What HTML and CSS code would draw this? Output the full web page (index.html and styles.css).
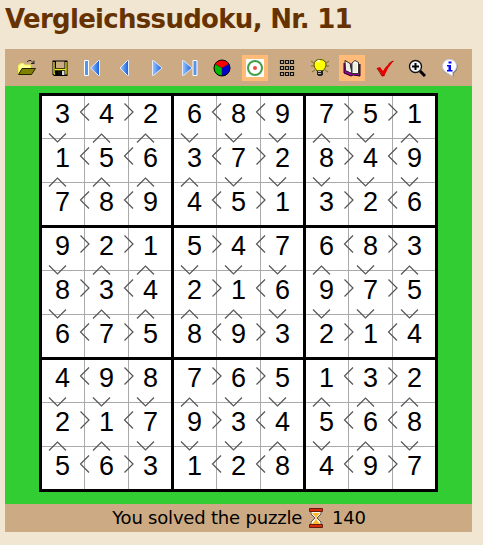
FILE: index.html
```html
<!DOCTYPE html>
<html lang="de">
<head>
<meta charset="utf-8">
<title>Vergleichssudoku, Nr. 11</title>
<link rel="stylesheet" href="styles.css">
</head>
<body>
<h1>Vergleichssudoku, Nr. 11</h1>
<main class="applet">
<nav class="toolbar">
<svg viewBox="0 0 18 18"><path d="M0.5 15.5V6h1l1-1.500h3l1 1.500h6v3" fill="#ff9" stroke="#ee5"/><path d="M0.500 15.500L4 9.500h13.500l-4 6z" fill="#808000" stroke="#222200"/><path d="M9 3l2-1.500h2l3 3M16 1.500v3h-3" fill="none" stroke="#222"/></svg>
<svg viewBox="0 0 18 18"><path d="M1.500 1.500h15v15.500H3L1.500 15.500z" fill="#000"/><path d="M3 3v11.500l1 1M15 3v12.500M4 10.500h11" fill="none" stroke="#ee2" stroke-width="1.300"/><path d="M5 2.500h8.500v6.500H5z" fill="#ccab84"/><path d="M7 12h3v4H7z" fill="#111"/><path d="M11 12h2.500v4H11z" fill="#ddd"/></svg>
<svg viewBox="0 0 18 18"><defs><linearGradient id="blue"><stop stop-color="#9bc7ff"/><stop offset="1" stop-color="#145ddd"/></linearGradient></defs><path d="M1.500 1.500h4v15h-4z" fill="#5595ed" stroke="#fff"/><path d="M16.500 1.500v15h-1L7.500 9l8-7.500z" fill="url(#blue)" stroke="#e4edff"/></svg>
<svg viewBox="0 0 18 18"><path d="M12.500 1.500v15h-1L4 9l7.500-7.500z" fill="url(#blue)" stroke="#e4edff"/></svg>
<svg viewBox="0 0 18 18"><path d="M4.500 1.500v15h1L14 9 5.500 1.500z" fill="url(#blue)" stroke="#e4edff"/></svg>
<svg viewBox="0 0 18 18"><path d="M1.500 1.500v15h1L11 9 2.500 1.500z" fill="url(#blue)" stroke="#e4edff"/><path d="M12 1.500h4v15h-4z" fill="#5595ed" stroke="#fff"/></svg>
<svg viewBox="0 0 18 18"><circle cx="9" cy="9" r="8" fill="#f00"/><path d="M9 9v8A8 8 0 0 1 2 5z" fill="#00b900"/><path d="M9 9v8A8 8 0 0 0 16 5z" fill="#00c"/><path d="M2 5l7 4 7-4M9 9v8" fill="none" stroke="#222" stroke-width=".5"/><circle cx="9" cy="9" r="8" fill="none" stroke="#000"/></svg>
<span class="active"><svg viewBox="0 0 18 18"><path d="M0 0h18v18H0z" fill="#fff"/><circle cx="9" cy="9" r="7" fill="none" stroke="#43a047" stroke-width="2"/><circle cx="9" cy="9" r="2" fill="#f44a44"/></svg></span>
<svg viewBox="0 0 18 18"><path d="M2.500 1.500h3v3h-3zm5 0h3v3h-3zm5 0h3v3h-3zm-10 6h3v3h-3zm5 0h3v3h-3zm5 0h3v3h-3zm-10 6h3v3h-3zm5 0h3v3h-3zm5 0h3v3h-3z" fill="#c7b69d" stroke="#111" stroke-width="1.200"/></svg>
<svg viewBox="0 0 18 18"><path d="M0 2l3 2M18 2l-3 2M0 7h3M15 7h3M1 13l3-2M17 13l-3-2" stroke="#777020"/><path d="M6 12Q3 8.500 3 6Q3 .500 9 .500T15 6q0 2.500-3 6z" fill="#ff0" stroke="#555200"/><path d="M6 3.500q1-2 3-2" fill="none" stroke="#fff" stroke-width="1.500"/><path d="M6 11.500h6v4l-1.500 1.500h-3L6 15.500z" fill="#222"/><path d="M7 12.500h3M7 14.500h3" stroke="#bbb"/></svg>
<span class="active"><svg viewBox="0 0 18 18"><path d="M1 4v10l7 3 2-1 7 1V5" fill="#909" stroke="#202"/><path d="M2 1.500l5 3 2 10-6.500-3z" fill="#fff" stroke="#222"/><path d="M9 14.500V4l3-2.500 3.500 2v11z" fill="#fff" stroke="#333"/><path d="M4 4v7M6 5v7M11 4v9M13 4v9" stroke="#ddb"/></svg></span>
<svg viewBox="0 0 18 18"><path d="M1 9l3-1 3 4Q11 5 17.500 2 12 8 8.500 16.500l-2 .5Q4 12 1 9z" fill="#e80000"/><path d="M1 9l2 3 3 5 2.500-.5" fill="none" stroke="#900"/><path d="M17.500 2q-3 1-5 3" fill="none" stroke="#900"/></svg>
<svg viewBox="0 0 18 18"><path d="M12 12l5 5" stroke="#000" stroke-width="3"/><circle cx="7.500" cy="7.500" r="6" fill="#f4f4f4" stroke="#111" stroke-width="1.400"/><path d="M4 7.500h7M7.500 4v7" stroke="#000" stroke-width="2"/></svg>
<svg viewBox="0 0 18 18"><path d="M6 14.500C-1 12 .5 1 9 1s10 10 3.500 13v3.500z" fill="#666"/><path d="M6 14C-1 11 .5.500 8.500.500S18 10 11.500 13.500V17z" fill="#fff" stroke="#ccd"/><path d="M7.500 2.500h3v2h-3zM6 6h4v5h1.500v1.500H6V11h1.500V7.500H6z" fill="#00f"/></svg>
</nav>
<div class="stage"><div class="board" id="board"></div></div>
<footer><span>You solved the puzzle</span><svg class="hourglass" viewBox="0 0 14 20"><path d="M2 3h10v3L8 10l4 4v3H2v-3l4-4-4-4z" fill="#fff8e9" stroke="#555"/><path d="M3 5h8L7.500 9v3l3.500 4H3l3.500-4V9z" fill="#ffb52e"/><path d="M.500.500h13v3H.500zm0 16h13v3H.500z" fill="#d92b0c" stroke="#60200d"/></svg><span>140</span></footer>
</main>
<script src="board.js"></script>
</body>
</html>
```
FILE: styles.css
```css
* { box-sizing: border-box; }
body {
  margin: 0;
  padding: 0 11px 0 5px;
  background: #f0e6d2;
  color: #000;
  font-family: Verdana, "DejaVu Sans", sans-serif;
}
h1 {
  margin: 0;
  height: 49px;
  padding-top: 3px;
  font-size: 26px;
  line-height: 32px;
  letter-spacing: -0.7px;
  white-space: nowrap;
  color: #663300;
}
.applet { width: 467px; }
.toolbar {
  display: flex;
  align-items: center;
  justify-content: space-between;
  height: 37px;
  padding: 0 13px;
  background: #ccab84;
}
.toolbar svg { display: block; flex: none; width: 18px; height: 18px; }
.active {
  display: flex;
  align-items: center;
  justify-content: center;
  flex: none;
  width: 26px;
  height: 26px;
  margin: 0 -4px;
  background: #ffbb77;
}
.stage { height: 418px; padding: 7px 0 0 34px; background: #32cd32; }
.board {
  display: grid;
  grid-template: repeat(9, 44px) / repeat(9, 44px);
  width: 399px;
  height: 399px;
  border: solid #000;
  border-width: 2px 1px 1px 2px;
  background: #fff;
}
.cell {
  position: relative;
  padding-left: 14px;
  font: 27px/38px "Liberation Sans", Arial, sans-serif;
  color: #000;
  box-shadow: inset -1px -1px #aaa;
}
.cell.right { box-shadow: inset -2px 0 #000, inset 0 -1px #aaa; }
.cell.bottom { box-shadow: inset 0 -2px #000, inset -1px 0 #aaa; }
.cell.right.bottom { box-shadow: inset -2px -2px #000; }
.cell.left { border-left: 1px solid #000; padding-left: 13px; }
.cell.top { border-top: 1px solid #000; line-height: 36px; }
.sign {
  position: absolute;
  z-index: 1;
  fill: none;
  stroke: #555;
  stroke-width: 1.2;
}
.sign.beside { right: -5px; top: 8px; width: 11px; height: 18px; }
.cell.top .sign.beside { top: 7px; }
.sign.below { left: 7px; bottom: -4px; width: 19px; height: 10px; }
.cell.left .sign.below { left: 6px; }
footer {
  display: flex;
  align-items: center;
  justify-content: center;
  height: 28px;
  padding-left: 1px;
  background: #ccab84;
  font-size: 18px;
  line-height: 28px;
  letter-spacing: -0.2px;
}
.hourglass { width: 14px; height: 20px; margin: 0 9px 0 7px; }
```
FILE: board.js
```js
const rows = [
  "342689751", "156372849", "789451326",
  "921547683", "834216975", "675893214",
  "498765132", "217934568", "563128497"
];
const board = document.getElementById("board");

function sign(kind, width, height, path) {
  return `<svg class="sign ${kind}" viewBox="0 0 ${width} ${height}"><path d="${path}"/></svg>`;
}

rows.forEach((row, y) => {
  [...row].forEach((digit, x) => {
    const cell = document.createElement("div");
    cell.className = "cell";
    if (x % 3 === 0) cell.classList.add("left");
    if (y % 3 === 0) cell.classList.add("top");
    if (x % 3 === 2) cell.classList.add("right");
    if (y % 3 === 2) cell.classList.add("bottom");
    let html = digit;
    if (x % 3 < 2) {
      html += sign("beside", 11, 18, digit < row[x + 1] ? "M10 .5L1.500 9l8.500 8.500" : "M1.500.500L10 9l-8.500 8.500");
    }
    if (y % 3 < 2) {
      html += sign("below", 19, 10, digit < rows[y + 1][x] ? "M1 9.500L9.500 1l8.500 8.500" : "M1 .500L9.500 9 18 .500");
    }
    cell.innerHTML = html;
    board.append(cell);
  });
});
```
